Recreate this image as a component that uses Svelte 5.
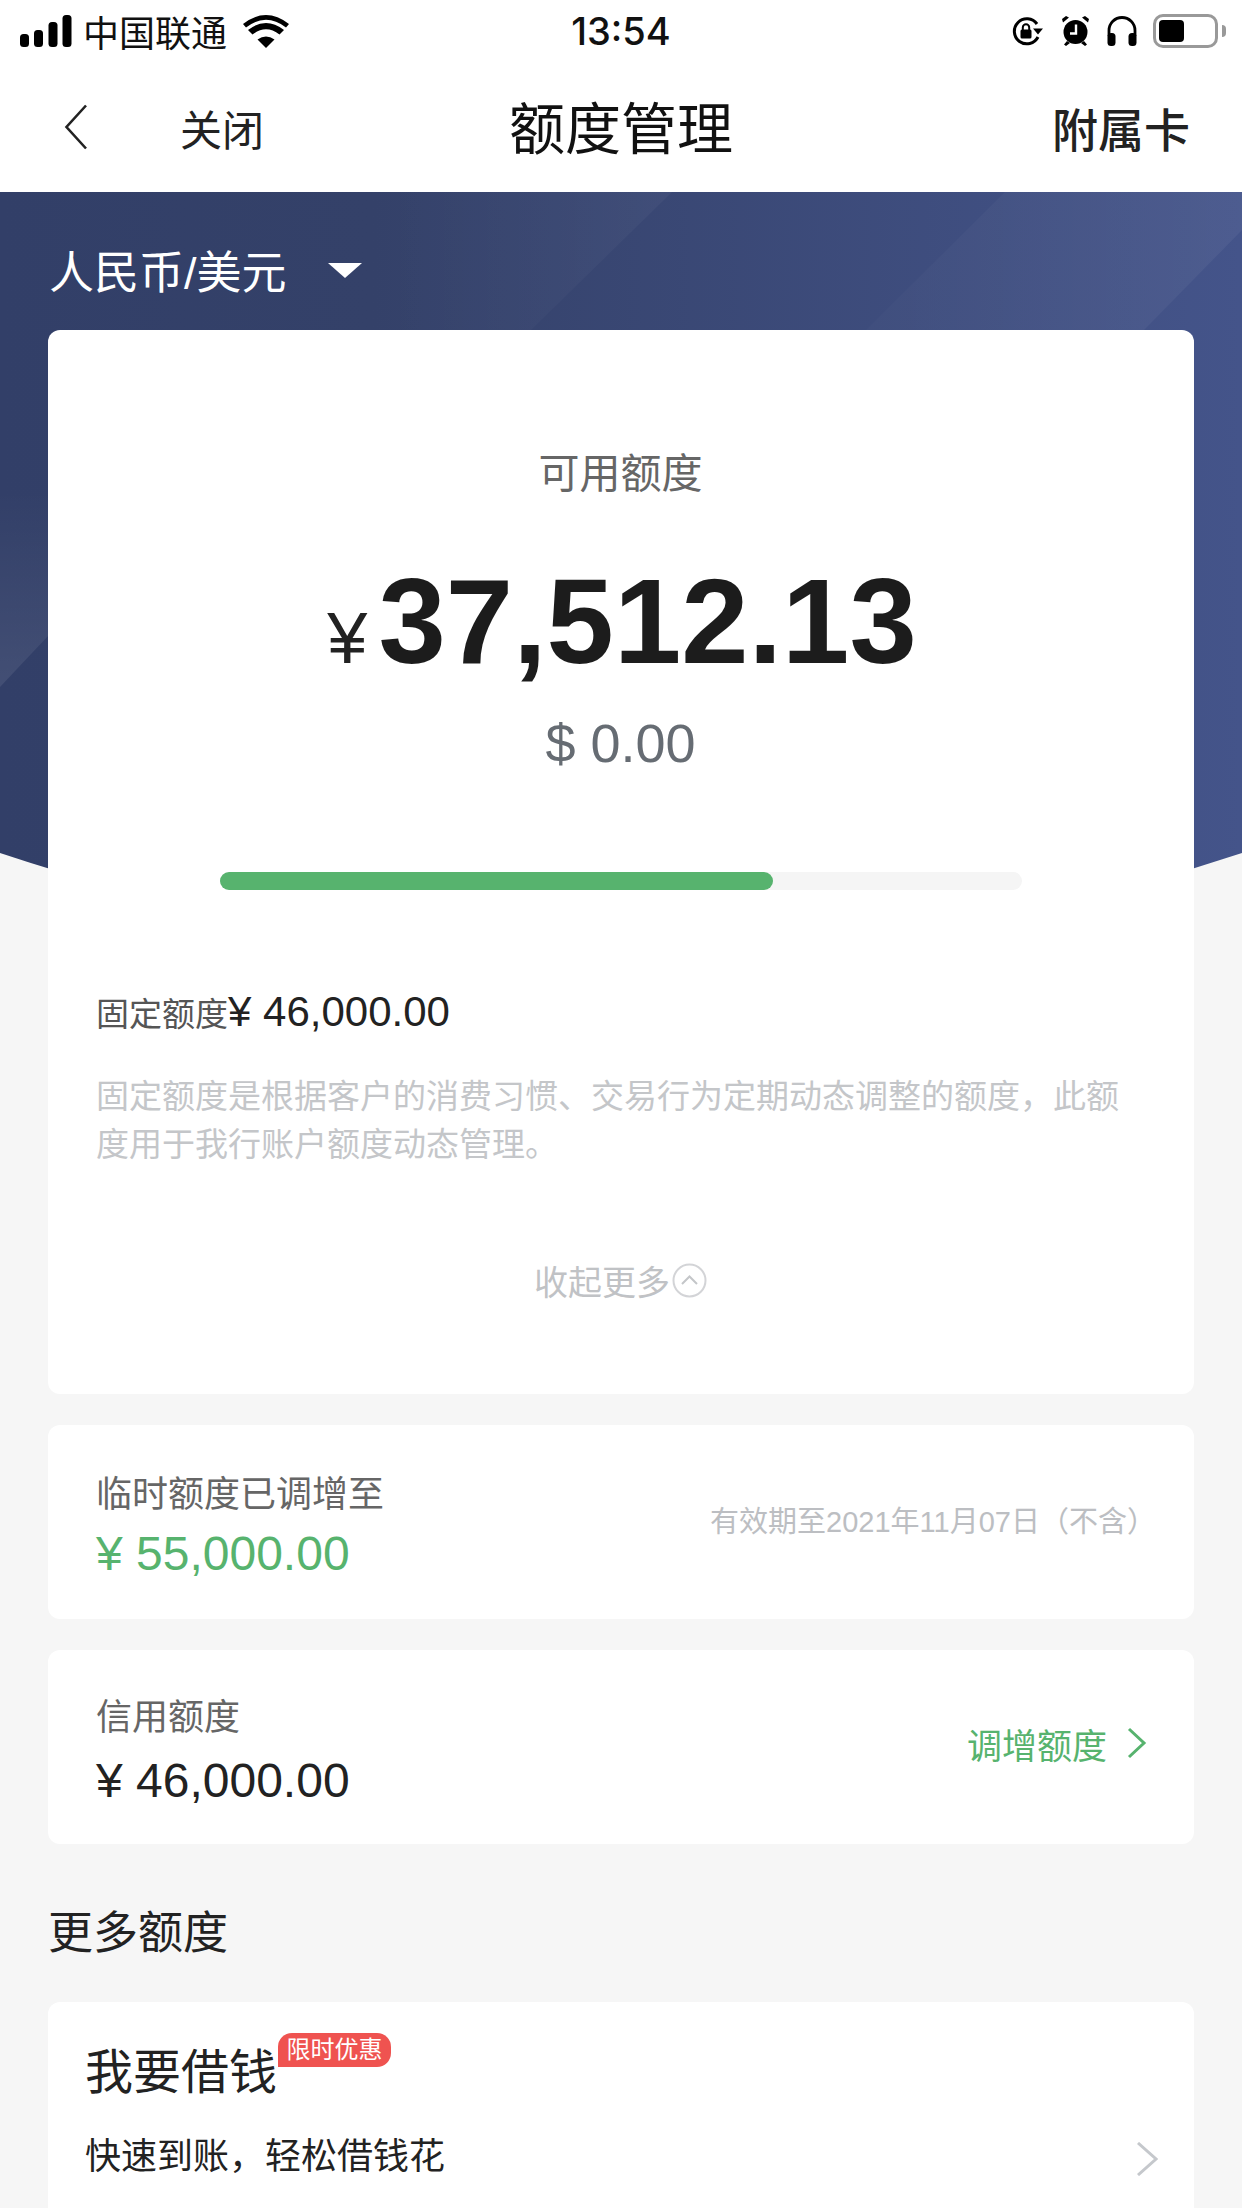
<script>
  const rows = [
    { label: '临时额度已调增至', amount: '¥ 55,000.00', tone: 'green', note: '有效期至2021年11月07日\uFF08不含\uFF09' },
    { label: '信用额度', amount: '¥ 46,000.00', tone: 'dark', link: '调增额度' }
  ];
</script>

<div class="page">
  <svg class="hero-bg" width="1242" height="940" viewBox="0 0 1242 940" aria-hidden="true">
    <defs>
      <linearGradient id="heroFill" x1="0" y1="0" x2="1" y2="0">
        <stop offset="0" stop-color="#323f68" />
        <stop offset="0.3" stop-color="#344169" />
        <stop offset="1" stop-color="#44548a" />
      </linearGradient>
      <linearGradient id="streakA" gradientUnits="userSpaceOnUse" x1="380" y1="192" x2="660" y2="192">
        <stop offset="0" stop-color="#fff" stop-opacity="0" />
        <stop offset="1" stop-color="#fff" stop-opacity="0.035" />
      </linearGradient>
      <linearGradient id="streakB" gradientUnits="userSpaceOnUse" x1="866" y1="192" x2="1242" y2="192">
        <stop offset="0" stop-color="#fff" stop-opacity="0.015" />
        <stop offset="1" stop-color="#fff" stop-opacity="0.05" />
      </linearGradient>
      <linearGradient id="streakC" gradientUnits="userSpaceOnUse" x1="0" y1="490" x2="0" y2="680">
        <stop offset="0" stop-color="#fff" stop-opacity="0" />
        <stop offset="1" stop-color="#fff" stop-opacity="0.08" />
      </linearGradient>
      <clipPath id="heroClip">
        <path d="M0 853Q621 1060 1242 853V192H0Z" />
      </clipPath>
    </defs>
    <g clip-path="url(#heroClip)">
      <rect y="192" width="1242" height="748" fill="url(#heroFill)" />
      <path d="M380 192H672L531 330H380Z" fill="url(#streakA)" />
      <path d="M1005 192L866 330H1144L1242 230V192Z" fill="url(#streakB)" />
      <path d="M0 687L48 636V480H0Z" fill="url(#streakC)" />
    </g>
  </svg>

  <div class="status">
    <div class="status-left">
      <svg class="signal" width="52" height="32" viewBox="0 0 52 32">
        <rect x="0" y="19" width="9" height="13" rx="3.5" />
        <rect x="14" y="15" width="9" height="17" rx="3.5" />
        <rect x="28.5" y="7" width="9" height="25" rx="3.5" />
        <rect x="42.5" y="0" width="9" height="32" rx="3.5" />
      </svg>
      <span class="carrier">中国联通</span>
      <svg class="wifi" width="46" height="33" viewBox="0 0 46 33">
        <path d="M23 33L14.5 24.5Q23 18.5 31.5 24.5Z" />
        <path d="M9.5 19.5L5 15Q23 1 41 15L36.5 19.5Q23 9 9.5 19.5Z" />
        <path d="M3 12.5L0 9Q23 -9 46 9L43 12.5Q23 -3 3 12.5Z" />
      </svg>
    </div>
    <span class="time">13:54</span>
    <div class="status-right">
      <svg class="lock" width="31" height="29" viewBox="0 0 31 29" fill="none">
        <path d="M25 7A12.5 12.5 0 1 0 26 20" stroke="#000" stroke-width="3" />
        <path d="M21 11.5H31L26 17.5Z" fill="#000" />
        <rect x="8.5" y="12.5" width="11" height="9" rx="1.5" fill="#000" />
        <path d="M10.8 13V10.5A3.2 3.2 0 0 1 17.2 10.5V13" stroke="#000" stroke-width="2" />
      </svg>
      <svg class="alarm" width="27" height="30" viewBox="0 0 27 30">
        <circle cx="13.5" cy="16" r="12" />
        <path d="M1 6.5L7 1.5L4 0L0 3ZM26 6.5L20 1.5L23 0L27 3ZM5 25L2 28.5L4 30L8 27ZM22 25L25 28.5L23 30L19 27Z" />
        <path d="M14 8.5V17.5H8" fill="none" stroke="#fff" stroke-width="2.4" />
      </svg>
      <svg class="phones" width="30" height="30" viewBox="0 0 30 30" fill="none">
        <path d="M2 20V14.5A13 13 0 0 1 28 14.5V20" stroke="#000" stroke-width="2.8" />
        <rect x="0.5" y="17" width="8" height="13" rx="3.5" fill="#000" />
        <rect x="21.5" y="17" width="8" height="13" rx="3.5" fill="#000" />
      </svg>
      <div class="battery">
        <div class="battery-level"></div>
      </div>
      <i class="battery-nub"></i>
    </div>
  </div>

  <div class="nav">
    <svg class="back" width="24" height="46" viewBox="0 0 24 46" fill="none">
      <path d="M22 1.5L2.5 23L22 44.5" stroke="#222" stroke-width="2.6" />
    </svg>
    <span class="close">关闭</span>
    <span class="title">额度管理</span>
    <span class="extra">附属卡</span>
  </div>

  <div class="currency">
    <span>人民币/美元</span>
    <i class="caret"></i>
  </div>

  <div class="cards">
    <section class="card main">
      <div class="avail">可用额度</div>
      <div class="amount"><span class="yen">¥</span><span class="big">37,512.13</span></div>
      <div class="usd">$ 0.00</div>
      <div class="track"><div class="fill" style="width: {(553 / 802) * 100}%"></div></div>
      <div class="fixed"><span>固定额度</span><b>¥ 46,000.00</b></div>
      <p class="desc">固定额度是根据客户的消费习惯、交易行为定期动态调整的额度&#xFF0C;此额度用于我行账户额度动态管理。</p>
      <div class="fold">
        <span>收起更多</span>
        <svg width="35" height="35" viewBox="0 0 35 35" fill="none">
          <circle cx="17.5" cy="17.5" r="16" stroke="#d3d4d7" stroke-width="2" />
          <path d="M10 21L17.5 13.5L25 21" stroke="#c4c6c9" stroke-width="2" />
        </svg>
      </div>
    </section>

    {#each rows as row}
      <section class="card row">
        <div>
          <div class="row-label">{row.label}</div>
          <div class="row-amount {row.tone}">{row.amount}</div>
        </div>
        {#if row.note}
          <span class="note">{row.note}</span>
        {/if}
        {#if row.link}
          <span class="link">
            {row.link}
            <svg width="20" height="32" viewBox="0 0 20 32" fill="none">
              <path d="M2 2L17 16L2 30" stroke="#57b36e" stroke-width="3" />
            </svg>
          </span>
        {/if}
      </section>
    {/each}

    <h2 class="more">更多额度</h2>

    <section class="card loan">
      <div class="loan-head">
        <span class="loan-title">我要借钱</span>
        <span class="badge">限时优惠</span>
      </div>
      <div class="loan-sub">
        <span>快速到账&#xFF0C;轻松借钱花</span>
        <svg width="22" height="34" viewBox="0 0 22 34" fill="none">
          <path d="M2 1L20 17L2 33" stroke="#c5c8cc" stroke-width="3" />
        </svg>
      </div>
    </section>
  </div>
</div>

<style>
  :global(body) {
    background: #f6f6f6;
  }
  .page {
    position: relative;
    width: 1242px;
    height: 2208px;
    overflow: hidden;
    font-family: "Liberation Sans", "Noto Sans CJK SC", sans-serif;
    color: #222;
  }
  .hero-bg {
    position: absolute;
    top: 0;
    left: 0;
  }
  .status {
    position: relative;
    display: flex;
    justify-content: space-between;
    align-items: center;
    height: 62px;
    padding: 0 16px 0 20px;
    background: #fff;
  }
  .status-left,
  .status-right {
    display: flex;
    align-items: center;
    fill: #000;
  }
  .carrier {
    margin-left: 11px;
    font-size: 36px;
    color: #111;
  }
  .wifi {
    margin-left: 16px;
  }
  .time {
    position: absolute;
    left: 0;
    right: 0;
    text-align: center;
    font-size: 38px;
    color: #111;
    font-family: "Inter", sans-serif;
    font-weight: 500;
  }
  .alarm {
    margin-left: 19px;
  }
  .phones {
    margin-left: 18px;
  }
  .battery {
    width: 65px;
    height: 34px;
    margin-left: 16px;
    padding: 3px;
    box-sizing: border-box;
    border: 3px solid #999;
    border-radius: 10px;
  }
  .battery-level {
    width: 25px;
    height: 22px;
    background: #000;
    border-radius: 4px;
  }
  .battery-nub {
    width: 4px;
    height: 12px;
    margin-left: 4px;
    border-radius: 0 6px 6px 0;
    background: #999;
  }
  .nav {
    position: relative;
    display: flex;
    align-items: center;
    height: 130px;
    background: #fff;
  }
  .back {
    margin-left: 64px;
  }
  .close {
    margin-left: 92px;
    font-size: 42px;
    color: #222;
  }
  .title {
    position: absolute;
    left: 0;
    right: 0;
    top: 38px;
    text-align: center;
    font-size: 56px;
    line-height: 60px;
    color: #111;
  }
  .extra {
    margin-left: auto;
    margin-right: 52px;
    font-size: 46px;
    font-weight: 500;
    color: #222;
  }
  .currency {
    position: relative;
    display: flex;
    align-items: center;
    height: 138px;
    padding: 16px 0 0 49px;
    box-sizing: border-box;
    font-size: 45px;
    color: #fff;
  }
  .caret {
    width: 0;
    height: 0;
    margin-left: 41px;
    margin-top: 2px;
    border-left: 17px solid transparent;
    border-right: 17px solid transparent;
    border-top: 15px solid #fff;
  }
  .cards {
    position: relative;
    display: flex;
    flex-direction: column;
    gap: 31px;
    padding: 0 48px;
  }
  .card {
    background: #fff;
    border-radius: 12px;
  }
  .main {
    height: 1064px;
    display: flex;
    flex-direction: column;
    padding: 0 49px 0 48px;
    box-sizing: border-box;
  }
  .avail {
    margin-top: 118px;
    line-height: 52px;
    text-align: center;
    font-size: 41px;
    color: #666;
  }
  .amount {
    display: flex;
    justify-content: center;
    align-items: baseline;
    margin-top: 51px;
    padding-left: 3px;
    height: 140px;
    line-height: 140px;
  }
  .yen {
    font-size: 72px;
    margin-right: 11px;
    color: #222;
  }
  .big {
    font-size: 121px;
    font-weight: 700;
    color: #1c1c1c;
  }
  .usd {
    margin-top: 21px;
    line-height: 62px;
    text-align: center;
    font-size: 54px;
    color: #666c73;
  }
  .track {
    width: 802px;
    height: 18px;
    margin: 98px auto 0;
    border-radius: 9px;
    background: #f5f5f5;
  }
  .fill {
    height: 100%;
    border-radius: 9px;
    background: #57b36e;
  }
  .fixed {
    display: flex;
    align-items: baseline;
    margin-top: 94px;
    font-size: 33px;
    line-height: 56px;
    color: #555;
  }
  .fixed b {
    font-weight: 400;
    font-size: 42px;
    color: #222;
  }
  .desc {
    margin: 30px 0 0;
    font-size: 33px;
    line-height: 48px;
    color: #c4c6c9;
  }
  .fold {
    display: flex;
    justify-content: center;
    align-items: center;
    gap: 2px;
    margin-top: 87px;
    font-size: 34px;
    color: #c0c2c5;
  }
  .row {
    height: 194px;
    display: flex;
    align-items: center;
    justify-content: space-between;
    padding: 14px 47px 0 48px;
    box-sizing: border-box;
  }
  .row-label {
    font-size: 36px;
    line-height: 44px;
    color: #666;
  }
  .row-amount {
    font-size: 48px;
    line-height: 62px;
    margin-top: 6px;
  }
  .green {
    color: #57b36e;
  }
  .dark {
    margin-top: 10px;
    color: #222;
  }
  .note {
    margin: 0 -9px 20px 0;
    font-size: 29px;
    color: #bcbec2;
  }
  .link {
    display: flex;
    align-items: center;
    gap: 20px;
    margin-bottom: 22px;
    font-size: 35px;
    color: #57b36e;
  }
  .more {
    margin: 29px 0 7px;
    line-height: 60px;
    font-size: 45px;
    font-weight: 400;
    color: #222;
  }
  .loan {
    height: 240px;
    padding: 28px 36px 0 37px;
    box-sizing: border-box;
  }
  .loan-head {
    display: flex;
    align-items: flex-start;
  }
  .loan-title {
    margin-top: 11px;
    font-size: 48px;
    line-height: 64px;
    color: #222;
  }
  .badge {
    width: 113px;
    height: 34px;
    margin: 3px 0 0 1px;
    border-radius: 14px 14px 14px 0;
    background: #ef5350;
    color: #fff;
    font-size: 24px;
    line-height: 34px;
    text-align: center;
  }
  .loan-sub {
    display: flex;
    justify-content: space-between;
    align-items: center;
    margin-top: 22px;
    font-size: 36px;
    color: #222;
  }
  .loan-sub svg {
    margin-top: 12px;
  }
</style>
